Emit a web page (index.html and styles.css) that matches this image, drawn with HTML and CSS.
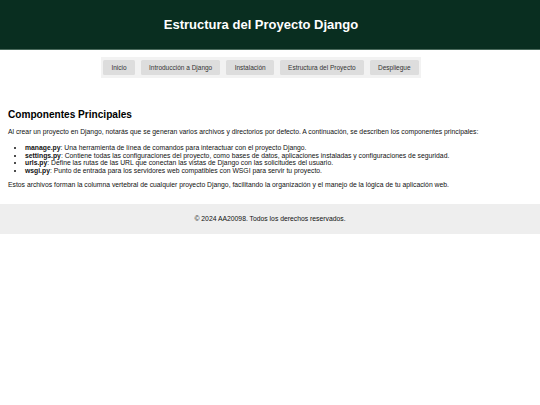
FILE: index.html
```html
<!DOCTYPE html>
<html lang="es">
<head>
<meta charset="utf-8">
<title>Estructura del Proyecto Django</title>
<link rel="stylesheet" href="styles.css">
</head>
<body>
<header class="site-header">
  <h1 class="site-title">Estructura del Proyecto Django</h1>
</header>
<nav class="site-nav">
  <ul class="nav-list">
    <li><a class="nav-link" href="#">Inicio</a></li>
    <li><a class="nav-link" href="#">Introducción a Django</a></li>
    <li><a class="nav-link" href="#">Instalación</a></li>
    <li><a class="nav-link" href="#">Estructura del Proyecto</a></li>
    <li><a class="nav-link" href="#">Despliegue</a></li>
  </ul>
</nav>
<main class="content">
  <h2 class="section-title">Componentes Principales</h2>
  <p class="text">Al crear un proyecto en Django, notarás que se generan varios archivos y directorios por defecto. A continuación, se describen los componentes principales:</p>
  <ul class="file-list">
    <li><strong>manage.py</strong>: Una herramienta de línea de comandos para interactuar con el proyecto Django.</li>
    <li><strong>settings.py</strong>: Contiene todas las configuraciones del proyecto, como bases de datos, aplicaciones instaladas y configuraciones de seguridad.</li>
    <li><strong>urls.py</strong>: Define las rutas de las URL que conectan las vistas de Django con las solicitudes del usuario.</li>
    <li><strong>wsgi.py</strong>: Punto de entrada para los servidores web compatibles con WSGI para servir tu proyecto.</li>
  </ul>
  <p class="text">Estos archivos forman la columna vertebral de cualquier proyecto Django, facilitando la organización y el manejo de la lógica de tu aplicación web.</p>
</main>
<footer class="site-footer">
  <p class="footer-text">© 2024 AA20098. Todos los derechos reservados.</p>
</footer>
</body>
</html>
```

FILE: styles.css
```css
html, body {
  margin: 0;
  padding: 0;
  background: #ffffff;
}

body {
  font-family: "Liberation Sans", Arial, sans-serif;
  font-size: 6.8px;
  line-height: 7.6px;
  color: #111;
}

.site-header {
  background: #092e20;
  height: 50px;
  display: flex;
  align-items: center;
  justify-content: center;
  padding-right: 18px;
  border-bottom: 0.5px solid #4a6a5c;
  box-sizing: border-box;
}

.site-title {
  margin: 0;
  color: #ffffff;
  font-size: 13px;
  line-height: 15px;
  font-weight: bold;
}

.site-nav {
  display: flex;
  justify-content: center;
  padding-right: 18px;
  margin-top: 7px;
}

.nav-list {
  list-style: none;
  margin: 0;
  padding: 3px 2.7px 2.7px;
  display: flex;
  gap: 6px;
  background: #f2f2f2;
  font-size: 6.5px;
  line-height: 7.5px;
}

.nav-link {
  display: block;
  background: #dddddd;
  color: #333;
  text-decoration: none;
  padding: 3.75px 8.2px;
  border-radius: 1.5px;
}

.content {
  padding: 31.5px 8px 16px;
}

.section-title {
  margin: 0 0 8.1px;
  font-size: 10.1px;
  line-height: 11.2px;
  font-weight: bold;
  color: #000;
}

.text {
  margin: 0;
}

.file-list {
  margin: 8px 0 6px;
  padding-left: 17px;
  line-height: 7.7px;
}

.site-footer {
  background: #eeeeee;
  padding: 11px 0;
  text-align: center;
}

.footer-text {
  margin: 0;
}
```
